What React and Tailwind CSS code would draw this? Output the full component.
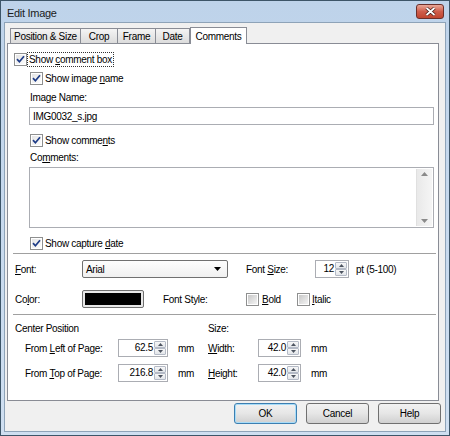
import React from 'react';

// tiny Vista-style widgets
const Check = ({ on, dim }) => (
  <span className="w-[13px] h-[13px] flex-none flex border border-[#8e8f8f] bg-white p-[1px]">
    <span className={`flex-1 flex items-center justify-center bg-gradient-to-br ${dim ? 'from-[#c8c8c8] to-[#f4f4f4]' : 'from-[#e4e4e4] to-[#fdfdfd]'}`}>
      {on && (
        <svg width="9" height="9" viewBox="0 0 9 9">
          <path d="M1 4.2 L3.4 6.8 L8 1.2" stroke="#1d3b86" strokeWidth="1.7" fill="none" />
        </svg>
      )}
    </span>
  </span>
);

const U = ({ children }) => <span className="underline underline-offset-[1px]">{children}</span>;

const Arrows = () => (
  <span className="w-[13px] flex-none flex flex-col py-[1px] pr-[1px] gap-0">
    <span className="flex-1 flex items-center justify-center border border-[#b4bac6] rounded-[1px] bg-gradient-to-b from-[#f7f7f7] to-[#e3e6ea]">
      <svg width="5" height="3" viewBox="0 0 5 3"><path d="M0 3 L2.5 0 L5 3Z" fill="#4d5460" /></svg>
    </span>
    <span className="flex-1 flex items-center justify-center border border-[#b4bac6] rounded-[1px] bg-gradient-to-b from-[#f7f7f7] to-[#e3e6ea]">
      <svg width="5" height="3" viewBox="0 0 5 3"><path d="M0 0 L2.5 3 L5 0Z" fill="#4d5460" /></svg>
    </span>
  </span>
);

const Spin = ({ v, w }) => (
  <div className={`${w} h-[18px] flex-none flex border border-[#abadb3] bg-white`}>
    <span className="flex-1 text-right pr-[1px] leading-[16px]">{v}</span>
    <Arrows />
  </div>
);

const Btn = ({ children, def }) => (
  <div className={`w-[63px] h-[21px] rounded-[3px] border flex items-center justify-center ${def ? 'border-[#3c7fb1] shadow-[inset_0_0_0_1px_#a8dcf8]' : 'border-[#707070]'} bg-gradient-to-b from-[#f2f2f2] via-[#e6e6e6] to-[#d0d0d0]`}>
    {children}
  </div>
);

export default function App() {
  const tabs = [
    { t: 'Position & Size', w: 'w-[70px]' },
    { t: 'Crop', w: 'w-[37px]' },
    { t: 'Frame', w: 'w-[38px]' },
    { t: 'Date', w: 'w-[35px]' },
  ];

  return (
    <div className="w-[450px] h-[436px] border border-[#3d5568] bg-gradient-to-b from-[#bed3ea] to-[#cfdff1] flex flex-col font-['Liberation_Sans',Arial,sans-serif] text-[10px] tracking-[-0.3px] text-black select-none">
      {/* title bar */}
      <div className="h-[21px] flex-none flex items-start justify-between">
        <span className="pl-[6px] pt-[4px] text-[11px] text-[#1b1b1b]">Edit Image</span>
        <div className="mt-[3px] mr-[5px] w-[28px] h-[15px] rounded-[3px] border border-[#6c2f2a] bg-gradient-to-b from-[#e8a899] via-[#cf5d4b] to-[#c0452f] flex items-center justify-center">
          <svg width="11" height="9" viewBox="0 0 11 9">
            <path d="M1.5 1 L9.5 8 M9.5 1 L1.5 8" stroke="#3a1410" strokeWidth="3.2" />
            <path d="M1.5 1 L9.5 8 M9.5 1 L1.5 8" stroke="#fff" strokeWidth="1.8" />
          </svg>
        </div>
      </div>

      {/* client area */}
      <div className="mx-[3px] h-[410px] flex-none border border-[#8ea3b8] bg-[#f0f0f0] flex flex-col pt-[4px]">
        {/* tabs */}
        <div className="h-[16px] flex items-end pl-[5px]">
          {tabs.map((x, i) => (
            <div
              key={x.t}
              className={`${x.w} h-[15px] flex-none flex items-center justify-center whitespace-nowrap border-t border-l border-[#898c95] bg-gradient-to-b from-[#f4f4f4] to-[#dcdcdc] ${i === 3 ? 'border-r' : ''}`}
            >
              {x.t}
            </div>
          ))}
          <div className="w-[57px] h-[17px] -mb-px relative z-10 flex-none flex items-center justify-center border-t border-x border-[#898c95] bg-white">
            Comments
          </div>
        </div>

        {/* panel */}
        <div className="ml-[2px] w-[432px] h-[358px] flex-none border border-[#898c95] bg-white flex flex-col">
          <div className="mt-[7px] h-[16px] flex items-center pl-[6px] gap-[1px]">
            <Check on />
            <span className="outline outline-1 outline-dotted outline-[#333] px-[1px] leading-[13px]">
              Show <U>c</U>omment box
            </span>
          </div>
          <div className="mt-[3px] h-[16px] flex items-center pl-[22px] gap-[1px]">
            <Check on />
            <span className="pl-[1px]">Show image <U>n</U>ame</span>
          </div>
          <div className="mt-[3px] h-[16px] flex items-center pl-[22px]">Image Name:</div>
          <div className="mt-[2px] ml-[21px] w-[405px] h-[18px] border border-[#abadb3] bg-white flex items-center pl-[3px]">
            IMG0032_s.jpg
          </div>
          <div className="mt-[7px] h-[16px] flex items-center pl-[22px] gap-[1px]">
            <Check on />
            <span className="pl-[1px]">Show comme<U>n</U>ts</span>
          </div>
          <div className="mt-[1px] h-[16px] flex items-center pl-[22px]">
            Co<U>m</U>ments:
          </div>
          <div className="mt-[2px] ml-[21px] w-[405px] h-[61px] border border-[#abadb3] bg-white flex justify-end p-[1px]">
            <div className="w-[16px] flex flex-col justify-between items-center bg-gradient-to-r from-[#e9e9e9] to-[#f5f5f5] border-l border-[#e0e0e0] py-[3px]">
              <svg width="7" height="4" viewBox="0 0 7 4"><path d="M0 4 L3.5 0 L7 4Z" fill="#8a8a8a" /></svg>
              <svg width="7" height="4" viewBox="0 0 7 4"><path d="M0 0 L3.5 4 L7 0Z" fill="#8a8a8a" /></svg>
            </div>
          </div>
          <div className="mt-[7px] h-[16px] flex items-center pl-[22px] gap-[1px]">
            <Check on />
            <span className="pl-[1px]">Show capture <U>d</U>ate</span>
          </div>

          <div className="mt-[2px] ml-[5px] w-[423px] border-t border-[#a0a0a0]" />

          {/* font row */}
          <div className="mt-[6px] h-[18px] flex items-center pl-[7px]">
            <span className="w-[67px] flex-none"><U>F</U>ont:</span>
            <div className="w-[146px] h-[18px] flex-none border border-[#707070] rounded-[2px] bg-gradient-to-b from-[#fdfdfd] to-[#f0f0f0] flex items-center justify-between pl-[3px] pr-[6px]">
              <span>Arial</span>
              <svg width="7" height="4" viewBox="0 0 7 4"><path d="M0 0 L3.5 4 L7 0Z" fill="#000" /></svg>
            </div>
            <span className="ml-[18px] w-[69px] flex-none">Font <U>S</U>ize:</span>
            <Spin v="12" w="w-[34px]" />
            <span className="ml-[7px]">pt (5-100)</span>
          </div>

          {/* color row */}
          <div className="mt-[12px] h-[18px] flex items-center pl-[7px]">
            <span className="w-[67px] flex-none">Co<U>l</U>or:</span>
            <div className="w-[62px] h-[18px] flex-none border border-[#707070] rounded-[2px] bg-[#e8e8e8] p-[2px]">
              <div className="w-full h-full bg-black" />
            </div>
            <span className="ml-[19px] w-[83px] flex-none">Font Style:</span>
            <div className="w-[51px] flex-none flex items-center gap-[2px]">
              <Check dim />
              <span className="pl-[1px]"><U>B</U>old</span>
            </div>
            <div className="flex items-center gap-[2px]">
              <Check dim />
              <span><U>I</U>talic</span>
            </div>
          </div>

          <div className="mt-[6px] ml-[5px] w-[423px] border-t border-[#a0a0a0]" />

          <div className="mt-[5px] h-[16px] flex items-center pl-[7px]">
            <span className="w-[193px] flex-none">Center Position</span>
            <span>Size:</span>
          </div>
          <div className="mt-[3px] h-[18px] flex items-center pl-[17px]">
            <span className="w-[93px] flex-none">From <U>L</U>eft of Page:</span>
            <Spin v="62.5" w="w-[50px]" />
            <span className="ml-[10px] w-[30px] flex-none">mm</span>
            <span className="w-[50px] flex-none"><U>W</U>idth:</span>
            <Spin v="42.0" w="w-[43px]" />
            <span className="ml-[10px]">mm</span>
          </div>
          <div className="mt-[7px] h-[18px] flex items-center pl-[17px]">
            <span className="w-[93px] flex-none">From <U>T</U>op of Page:</span>
            <Spin v="216.8" w="w-[50px]" />
            <span className="ml-[10px] w-[30px] flex-none">mm</span>
            <span className="w-[50px] flex-none"><U>H</U>eight:</span>
            <Spin v="42.0" w="w-[43px]" />
            <span className="ml-[10px]">mm</span>
          </div>
        </div>

        {/* buttons */}
        <div className="mt-[2px] flex justify-end gap-[9px] pr-[4px]">
          <Btn def>OK</Btn>
          <Btn>Cancel</Btn>
          <Btn>Help</Btn>
        </div>
      </div>
    </div>
  );
}
